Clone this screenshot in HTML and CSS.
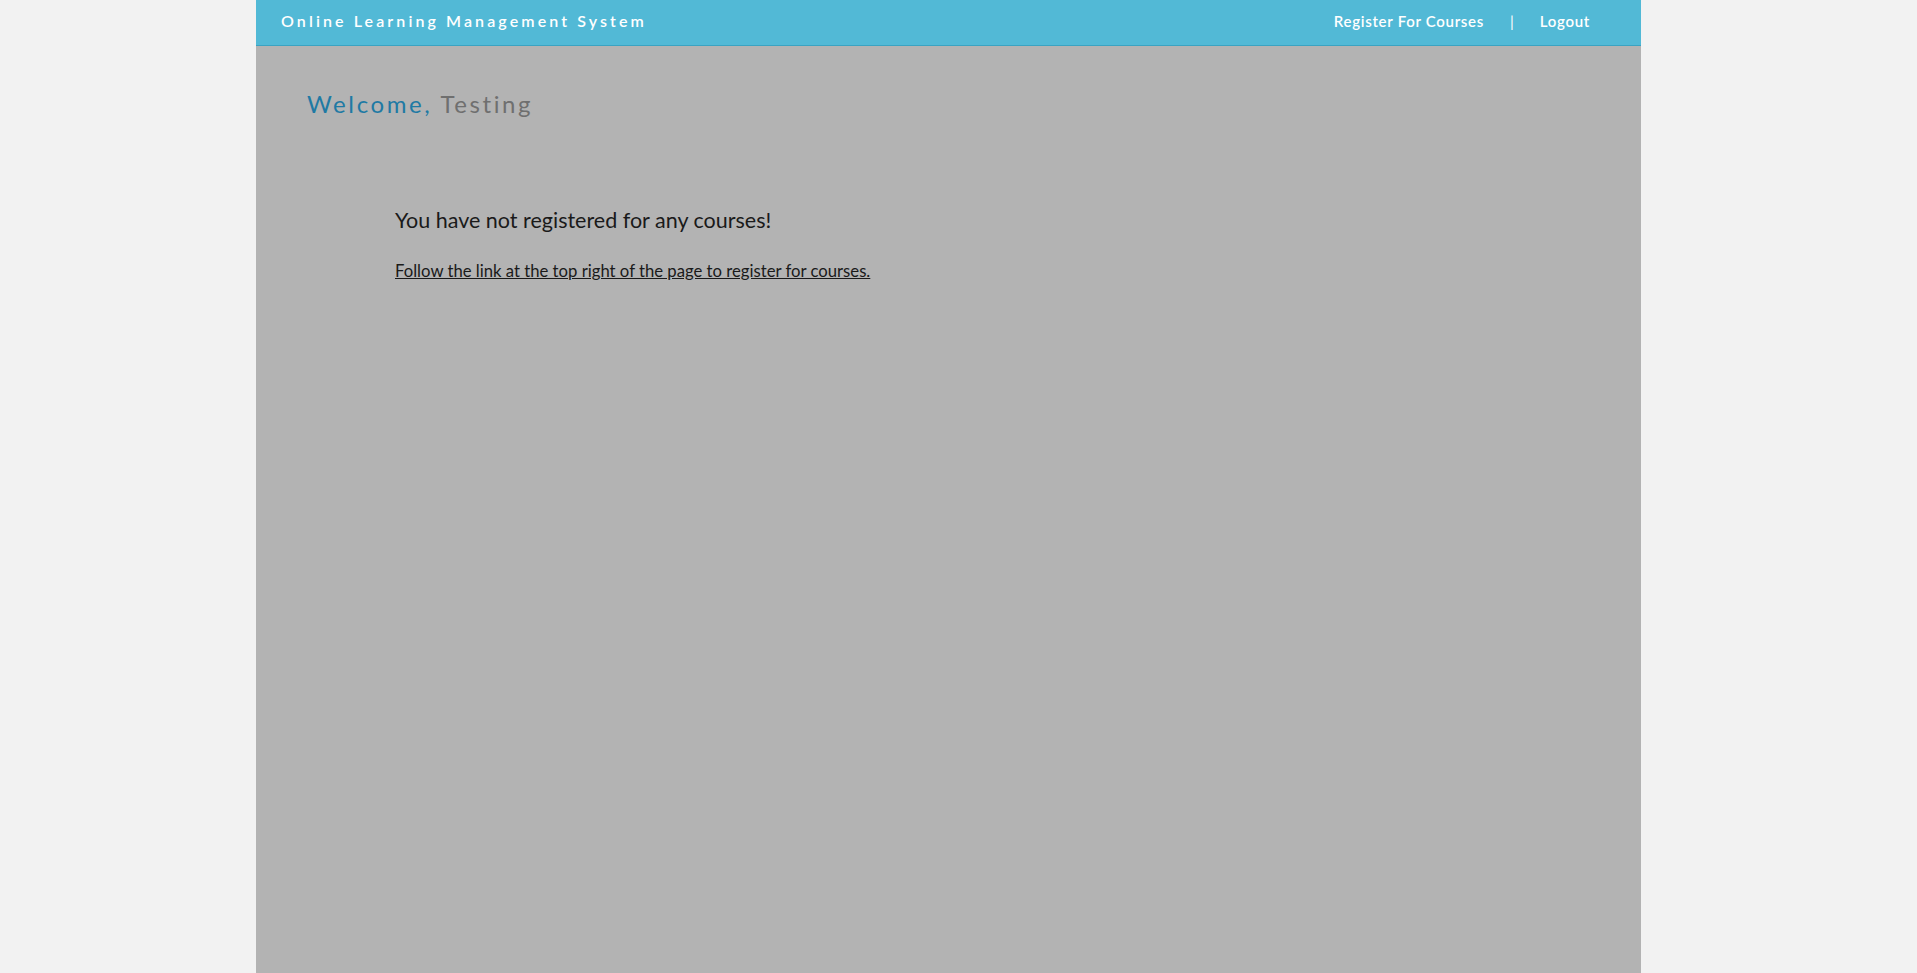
FILE: index.html
```html
<!DOCTYPE html>
<html lang="en">
<head>
<meta charset="utf-8">
<title>Online Learning Management System</title>
<link rel="stylesheet" href="styles.css">
</head>
<body>
<div class="page">
  <header class="topbar">
    <div class="brand">Online Learning Management System</div>
    <nav class="nav">
      <a href="#" class="nav-link">Register For Courses</a>
      <span class="nav-sep">|</span>
      <a href="#" class="nav-link">Logout</a>
    </nav>
  </header>
  <main class="content">
    <h1 class="welcome"><span class="welcome-label">Welcome,</span> <span class="welcome-name">Testing</span></h1>
    <section class="notice">
      <h2 class="notice-title">You have not registered for any courses!</h2>
      <a href="#" class="notice-link">Follow the link at the top right of the page to register for courses.</a>
    </section>
  </main>
</div>
</body>
</html>
```

FILE: styles.css
```css
html, body {
  margin: 0;
  padding: 0;
}
body {
  background: #f2f2f2;
  font-family: "Lato", "Open Sans", sans-serif;
}
.page {
  width: 1385px;
  margin-left: 256px;
}
.topbar {
  box-sizing: border-box;
  height: 46px;
  background: #52b9d6;
  border-bottom: 1px solid #3aa3c2;
  display: flex;
  align-items: center;
  justify-content: space-between;
  padding: 0 51px 4px 25px;
}
.brand {
  color: #ffffff;
  font-size: 16px;
  font-weight: 600;
  letter-spacing: 3.1px;
}
.nav {
  display: flex;
  align-items: center;
}
.nav-link {
  color: #ffffff;
  text-decoration: none;
  font-size: 15px;
  font-weight: 600;
  letter-spacing: 0.7px;
}
.nav-sep {
  color: #ffffff;
  font-size: 15px;
  margin: 0 26px;
}
.content {
  background: #b3b3b3;
  min-height: 1150px;
  padding: 46px 0 0 51px;
}
.welcome {
  margin: 0;
  font-size: 24px;
  font-weight: 400;
  letter-spacing: 2.6px;
  line-height: 1;
}
.welcome-label {
  color: #1f7aa4;
}
.welcome-name {
  color: #6f6f6f;
}
.notice {
  margin: 94px 0 0 88px;
  display: flex;
  flex-direction: column;
  align-items: flex-start;
}
.notice-title {
  margin: 0;
  font-size: 21.5px;
  font-weight: 400;
  color: #1a1a1a;
  line-height: 1;
}
.notice-link {
  margin-top: 31px;
  font-size: 16.7px;
  color: #1a1a1a;
  text-decoration: underline;
  line-height: 1;
}
```
